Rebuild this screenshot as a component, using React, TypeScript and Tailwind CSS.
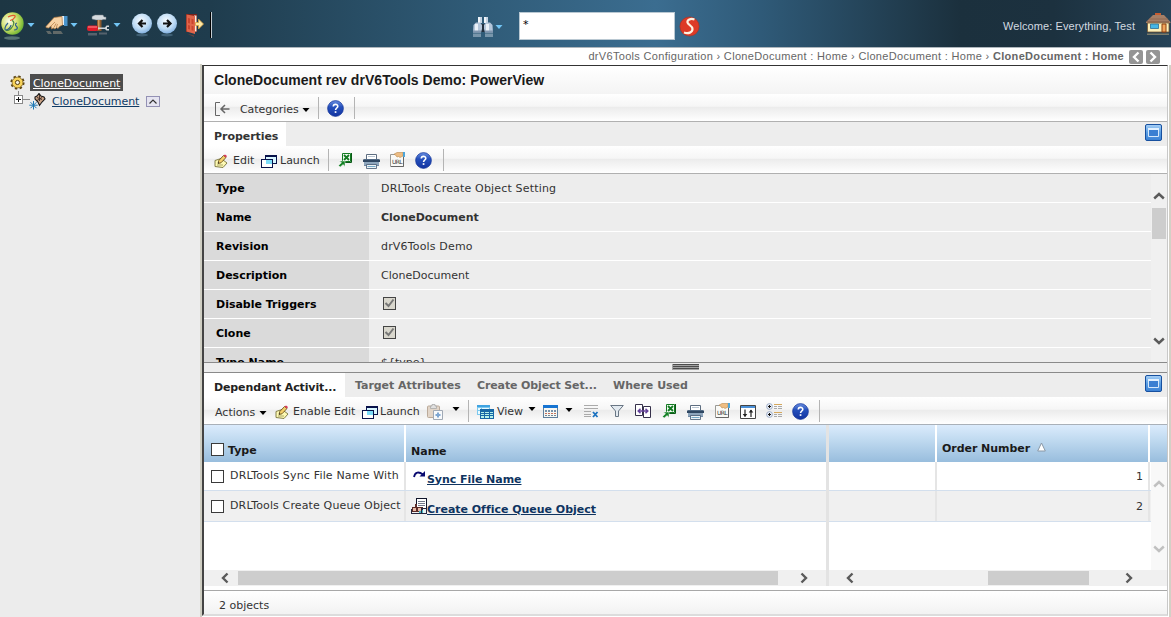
import React from "react";

type P = { className?: string; children?: React.ReactNode };

/* ---------- generic pieces ---------- */
const Slot = ({ className = "", children }: P) => (
  <div className={`flex shrink-0 items-center whitespace-nowrap ${className}`}>
    {typeof children === "string" ? <span className="pt-[2px]">{children}</span> : children}
  </div>
);
const Sep = () => <div className="h-[22px] w-px shrink-0 self-center bg-[#b4b4b4]" />;
const Caret = ({ className = "text-black" }: P) => (
  <svg width="8" height="5" viewBox="0 0 8 5" className={`shrink-0 ${className}`}>
    <path d="M.5 0h7L4 4z" fill="currentColor" />
  </svg>
);
const Box = () => <div className="h-[13px] w-[13px] shrink-0 border border-[#3a3a3a] bg-white" />;
const Checked = () => (
  <div className="mb-[2px] flex h-[13px] w-[13px] shrink-0 items-center justify-center border border-[#444] bg-[#d9d7cd]">
    <svg width="11" height="11" viewBox="0 0 11 11">
      <path d="M1.500 5l3 3 5-6.500" fill="none" stroke="#777" strokeWidth="2" />
    </svg>
  </div>
);
const Chevron = ({ d, className = "text-[#5a5a5a]" }: { d: "up" | "down" | "left" | "right"; className?: string }) => {
  const paths = {
    up: "M1.200 8.500L6 4l4.800 4.500",
    down: "M1.200 3.500L6 8l4.800-4.500",
    left: "M8.500 1.500L4 6l4.500 4.500",
    right: "M3.500 1.500L8 6l-4.500 4.500",
  };
  return (
    <svg width="12" height="12" viewBox="0 0 12 12" className={`shrink-0 ${className}`}>
      <path d={paths[d]} fill="none" stroke="currentColor" strokeWidth="2.400" />
    </svg>
  );
};

/* ---------- header icons ---------- */
const Globe = () => (
  <svg width="25" height="29" viewBox="0 0 25 29">
    <defs>
      <radialGradient id="globe" cx=".35" cy=".4" r=".7">
        <stop offset="0" stopColor="#fbfdf0" />
        <stop offset=".5" stopColor="#d3e070" />
        <stop offset=".85" stopColor="#86bf3c" />
        <stop offset="1" stopColor="#5aa53a" />
      </radialGradient>
    </defs>
    <ellipse cx="12" cy="27" rx="8" ry="1.800" fill="#8fb0a4" opacity=".5" />
    <circle cx="12.500" cy="12.500" r="11.200" fill="url(#globe)" />
    <path d="M8 6c4-2.500 8-2 7 0s-3 3-5 3.500" fill="none" stroke="#e2592f" strokeWidth="1.200" />
    <path d="M12 9.500c3 1 2 5-1 8-2 2-4 2.500-5 1.500" fill="none" stroke="#4d8a3a" strokeWidth="1.200" />
    <path d="M8 12c-3 3-4 7-2 7s5-3 5-5M17 12c-3 1-1 3 0 4s0 3-3 3" fill="none" stroke="#2f5f90" strokeWidth="1.200" />
  </svg>
);
const Hand = () => (
  <svg width="24" height="21" viewBox="0 0 24 21">
    <path d="M18 1h4.500v10H19z" fill="#4a94cc" />
    <path d="M16.500 1H19v9h-2z" fill="#e8f1f8" />
    <path d="M1 11.500L9 2.500l8-1 .5 8.500-3 1.500-1.500 2-1.500-1-1.500 1.500-1.800-1-1.700 1-.5-3L3.500 13 1 12.500z" fill="#f7d2a4" stroke="#b07840" strokeWidth=".7" />
    <path d="M6 11l4-4M9 12.500l2-4M11.500 12l1-3" stroke="#b07840" strokeWidth=".7" />
    <path d="M1 16h4l2 3H3zM8 16h8l2 3H8z" fill="#c9b49b" opacity=".4" />
  </svg>
);
const Hammer = () => (
  <svg width="23" height="24" viewBox="0 0 23 24">
    <path d="M5 2.500L8 1h8l1 2h2v2.500h-3l-1 .5H9L5 5z" fill="#d5dade" stroke="#757f86" strokeWidth=".5" />
    <path d="M10 6h4.500v11H10z" fill="#8d5a2d" />
    <path d="M11 6h1.500v10H11z" fill="#cf9a5f" />
    <rect x="0" y="11.500" width="11" height="5.500" rx="2" fill="#e01c2a" />
    <path d="M1 12.500h9v1H1z" fill="#ff8f8f" />
    <path d="M11 13.500h7l1.500-2H22v1.500h-2v2h2V16.500h-2.500L18 15h-7z" fill="#d0d5d8" />
    <path d="M1 19h9v2.500H1zM12 18.500h8v2h-8z" fill="#8b8b92" opacity=".5" />
  </svg>
);
const NavBall = ({ flip }: { flip?: boolean }) => (
  <svg width="21" height="25" viewBox="0 0 21 25">
    <defs>
      <radialGradient id="ball" cx=".45" cy=".35" r=".7">
        <stop offset="0" stopColor="#f4faff" />
        <stop offset=".6" stopColor="#bcdaf4" />
        <stop offset="1" stopColor="#79aadc" />
      </radialGradient>
    </defs>
    <ellipse cx="10" cy="23" rx="6" ry="1.500" fill="#7da6c4" opacity=".35" />
    <circle cx="10" cy="11.500" r="10" fill="url(#ball)" />
    <path
      d={flip ? "M6 11.500h7M10 8l3.500 3.500L10 15" : "M14 11.500H7.500M10.500 8L7 11.500l3.500 3.500"}
      fill="none"
      stroke="#111"
      strokeWidth="2.200"
    />
  </svg>
);
const Door = () => (
  <svg width="19" height="24" viewBox="0 0 19 24">
    <path d="M1 1h11v18H1z" fill="#7d2118" />
    <path d="M9 2.500h2.500v16H9z" fill="#f6efe2" />
    <path d="M1.500 1.500L10 3v18l-8.500-2.500z" fill="#e0654a" />
    <path d="M3 5l2 .5v5L3 10zM6.500 5.800l2 .5v5l-2-.5zM3 12l2 .5v4L3 16zM6.500 12.800l2 .5v4.500l-2-.5z" fill="#c9442e" />
    <path d="M10.500 9.500h3V6l5 5-5 5v-3.500h-3z" fill="#ffe9a5" stroke="#d9a03c" strokeWidth=".8" />
    <path d="M2 20.500l7 2v1.500z" fill="#b4452f" opacity=".5" />
  </svg>
);
const Binoculars = () => (
  <svg width="22" height="22" viewBox="0 0 22 22">
    <path d="M6 1h4v6H6zM12 1h4v6h-4z" fill="#c7d5e4" />
    <path d="M6 1h2v6H6zM12 1h2v6h-2z" fill="#f0f5fa" />
    <path d="M9 8h4v8H9z" fill="#22303f" />
    <path d="M1.500 9L4 6.500h4L10 9v4l-1 3.500H1z" fill="#b4c6da" />
    <path d="M12 9l2-2.500h4L20.500 9l.5 7.500h-8L12 13z" fill="#b4c6da" />
    <path d="M3 8h3v7H3zM14 8h3v7h-3z" fill="#eaf1f8" />
    <path d="M1 14.500h8v2H1zM13 14.500h8v2h-8z" fill="#8197b0" />
    <path d="M1 17.500h8v3.500H1zM13 17.500h8v3.500h-8z" fill="#a9bccd" opacity=".6" />
  </svg>
);
const RedS = () => (
  <svg width="21" height="21" viewBox="0 0 21 21">
    <circle cx="10.500" cy="10.500" r="9.600" fill="#dd3a26" stroke="#b4311f" strokeWidth=".6" />
    <path d="M15.500 3.500c-4-1.500-7.500.5-7 3S13.500 9.500 13.500 13s-4 5-8.500 3.500" fill="none" stroke="#fff1e0" strokeWidth="2.200" />
  </svg>
);
const House = () => (
  <svg width="25" height="23" viewBox="0 0 25 23">
    <path d="M9 0h6v3H9z" fill="#c75c30" />
    <path d="M7 2h11l6.500 7v1H0V9z" fill="#a57e66" />
    <path d="M3 6h19M1 8.500h22" stroke="#8b6650" strokeWidth=".8" />
    <path d="M1.500 10h21.500v9H1.500z" fill="#fbf0ba" stroke="#7a5630" strokeWidth=".8" />
    <path d="M4.500 11h8v4.500h-8z" fill="#47b7e6" stroke="#2c6e96" strokeWidth=".8" />
    <path d="M16 11h4v8h-4z" fill="#f1a45a" stroke="#8b3f10" />
    <path d="M1 20.500h22v1.500H1z" fill="#b4a37a" opacity=".6" />
  </svg>
);

/* ---------- toolbar icons ---------- */
const Help = () => (
  <svg width="17" height="17" viewBox="0 0 17 17">
    <defs>
      <linearGradient id="help" x2="0" y2="1">
        <stop offset="0" stopColor="#6a8fe0" />
        <stop offset=".4" stopColor="#2550bc" />
        <stop offset="1" stopColor="#1233a0" />
      </linearGradient>
    </defs>
    <circle cx="8.500" cy="8.500" r="7.900" fill="url(#help)" stroke="#17379a" strokeWidth=".7" />
    <path d="M6.300 6.500C6.300 3.600 10.800 3.800 10.800 6.200 10.800 8 8.600 8 8.600 10" fill="none" stroke="#fff" strokeWidth="1.600" />
    <path d="M7.700 11.200h1.700v1.700H7.700z" fill="#fff" />
  </svg>
);
const Pencil = () => (
  <svg width="14" height="14" viewBox="0 0 14 14">
    <path d="M1 6.500l6-2 6 4.500-4 4.500-8-1z" fill="#fdf9b4" stroke="#77733a" strokeWidth=".9" />
    <path d="M3 11h6" stroke="#aaa667" />
    <path d="M4 9.500l.8-3L9.500 1.500l2.500 2L7 8.800z" fill="#f5cf6a" stroke="#5b4412" strokeWidth=".8" />
    <path d="M9.500 1.500L11 .5 13 2l-1 1.500z" fill="#d83355" />
    <path d="M4 9.500l.4-1.500 1 .9z" fill="#222" />
  </svg>
);
const Launch = () => (
  <svg width="16" height="13" viewBox="0 0 16 13" shapeRendering="crispEdges">
    <path d="M4.500.5h11v8h-11z" fill="#d8f6ff" stroke="#08124a" />
    <path d="M4 0h12v2H4z" fill="#08124a" />
    <path d="M.5 4.500h11v8H.5z" fill="#fff" stroke="#08124a" />
    <path d="M5 5h6v4H5z" fill="#7cdcf8" />
    <path d="M0 4h12v1H0z" fill="#08124a" />
  </svg>
);
const Excel = () => (
  <svg width="14" height="14" viewBox="0 0 14 14">
    <path d="M4.500.5h8v8h-8z" fill="#f4fbf4" stroke="#137a22" />
    <path d="M6 2l5 5M11 2L6 7" stroke="#137a22" strokeWidth="1.800" />
    <path d="M13.500 0v9.500H6" fill="none" stroke="#0a5a16" />
    <path d="M1.500 8H7v5.500L5.200 11.500l-3 2.500L.5 12.500l3-2.800z" fill="#128024" stroke="#fff" strokeWidth=".5" />
  </svg>
);
const Printer = () => (
  <svg width="17" height="15" viewBox="0 0 17 15">
    <path d="M3.500.5h10v5h-10z" fill="#fff" stroke="#5d6d80" />
    <path d="M5 2.500h7" stroke="#b9c6d2" />
    <path d="M1 5h15v7H1z" fill="#728ba6" />
    <path d="M0 5.500h17V8H0z" fill="#2f4762" />
    <path d="M1 8h15v3H1z" fill="#8ea6bd" />
    <path d="M3.500 10.500h10v4h-10z" fill="#eef4f8" stroke="#40566e" strokeWidth=".8" />
    <path d="M4.500 12.500h8" stroke="#74a9c8" />
  </svg>
);
const UrlIcon = () => (
  <svg width="17" height="16" viewBox="0 0 17 16">
    <path d="M1.500 2.500h13v12h-13z" fill="#fafaf7" stroke="#9a9a96" />
    <path d="M2 14.500h12.500V3" fill="none" stroke="#666" />
    <path d="M5 2.200L8 .5h6v3.500l-3 1.500-1.500-1L8 5 6.500 3z" fill="#eebd83" stroke="#b98a4d" strokeWidth=".6" />
    <path d="M14 0h2v5h-2z" fill="#4da6da" />
    <text x="3" y="12" fontSize="6" textLength="10.500" fontFamily="DejaVu Sans, sans-serif" fill="#333">URL</text>
  </svg>
);
const Collapse = () => (
  <svg width="15" height="15" viewBox="0 0 15 15" fill="none" stroke="#666">
    <path d="M5 .5H.500v13H5" />
    <path d="M14.500 7H6M10 3L6 7l4 4" strokeWidth="1.500" />
  </svg>
);
const WindowIcon = () => (
  <svg width="17" height="17" viewBox="0 0 17 17">
    <defs>
      <linearGradient id="win" x2="0" y2="1">
        <stop offset="0" stopColor="#a8d0f6" />
        <stop offset=".5" stopColor="#5b9fe4" />
        <stop offset="1" stopColor="#3a80d4" />
      </linearGradient>
    </defs>
    <rect x=".5" y=".5" width="16" height="16" rx="1.500" fill="url(#win)" stroke="#17509f" />
    <path d="M3.500 4.500h10v8h-10z" fill="#3a7fd2" stroke="#d5e8fb" />
    <path d="M3 4h11v2H3z" fill="#e1f0ff" />
  </svg>
);
const Paste = () => (
  <svg width="17" height="16" viewBox="0 0 17 16">
    <rect x=".5" y="2" width="12" height="11.500" rx="1" fill="#e2d5c8" stroke="#bbaa9a" />
    <path d="M3.500 4.500V2h1.500V.5h3V2h1.500v2.500z" fill="#e0e0e0" stroke="#aaa" strokeWidth=".8" />
    <path d="M6.500 6.500h9v9h-9z" fill="#f7f9fb" stroke="#a0a9b5" />
    <path d="M11 8.500v5M8.500 11h5" stroke="#7ea6d2" strokeWidth="2" />
  </svg>
);
const Tables = () => (
  <svg width="17" height="14" viewBox="0 0 17 14" shapeRendering="crispEdges">
    <path d="M0 0h13v10H0z" fill="#7cc8ee" />
    <path d="M0 0h13v2H0z" fill="#3fa3e2" />
    <path d="M1 3h3v2H1zM5 3h7v2H5zM1 6h3v3H1z" fill="#eafaff" />
    <path d="M3 4h14v10H3z" fill="#1668a6" />
    <path d="M4 7h3v1H4zM8 7h4v1H8zM13 7h3v1h-3zM4 9h3v1H4zM8 9h4v1H8zM13 9h3v1h-3zM4 11h3v2H4zM8 11h4v2H8zM13 11h3v2h-3z" fill="#b5f1e9" />
  </svg>
);
const Calendar = () => (
  <svg width="15" height="13" viewBox="0 0 15 13" shapeRendering="crispEdges">
    <path d="M.5.5h14v12H.5z" fill="#f7f7f2" stroke="#5f7f9c" />
    <path d="M0 0h15v3H0z" fill="#1674d2" />
    <path d="M2 5h2v2H2zM5 5h2v2H5zM8 5h2v2H8zM11 5h2v2h-2z" fill="#7892aa" />
    <path d="M2 8h2v1H2zM5 8h2v1H5zM8 8h2v1H8zM11 8h2v1h-2z" fill="#c2705a" />
    <path d="M2 10h2v1H2zM5 10h2v1H5zM8 10h2v1H8zM11 10h2v1h-2z" fill="#6f8496" />
  </svg>
);
const WrapIcon = () => (
  <svg width="15" height="13" viewBox="0 0 15 13">
    <path d="M0 .5h14M0 3.500h14M0 6.500h7M0 9.500h7M0 11.500h7" stroke="#aaa" />
    <path d="M9 7l4.500 5M13.500 7L9 12" stroke="#1c72c0" strokeWidth="1.800" />
  </svg>
);
const Filter = () => (
  <svg width="14" height="12" viewBox="0 0 14 12">
    <path d="M.7.500h12.600L8.500 6v5.500h-3V6z" fill="#e3eaf0" stroke="#697684" />
  </svg>
);
const Compare = () => (
  <svg width="16" height="14" viewBox="0 0 16 14">
    <path d="M.5.500h7v11h-7zM8.500 2.500h7v11h-7z" fill="#fff" stroke="#35304a" />
    <path d="M3 7h10M5.500 4.800L3.200 7l2.300 2.200M10.500 4.800L12.800 7l-2.300 2.200" fill="none" stroke="#65429a" strokeWidth="1.500" />
  </svg>
);
const SortIcon = () => (
  <svg width="16" height="14" viewBox="0 0 16 14">
    <path d="M.5.500h15v13H.5z" fill="#fff" stroke="#444" />
    <path d="M1 1h14v2H1z" fill="#4a90d8" />
    <path d="M5 4.500v7M11 12V5" stroke="#222" strokeWidth="1.200" />
    <path d="M2.700 9h4.600L5 12zM8.700 7.500h4.600L11 4.500z" fill="#222" />
  </svg>
);
const TreeList = () => (
  <svg width="16" height="15" viewBox="0 0 16 15">
    <circle cx="3.500" cy="3.500" r="2.900" fill="#e8eef8" stroke="#8ea0bb" strokeWidth=".8" />
    <circle cx="3.500" cy="11.500" r="2.900" fill="#e8eef8" stroke="#8ea0bb" strokeWidth=".8" />
    <path d="M2 3.500h3M3.500 2v3M2 11.500h3M3.500 10v3" stroke="#111" />
    <path d="M8 1.500h8M8 9.500h8" stroke="#d6a85c" />
    <path d="M8 3.500h3m1 0h4M8 5.500h3m1 0h4M8 11.500h3m1 0h4M8 13.500h3m1 0h4" stroke="#aaa" />
  </svg>
);
const Grip = () => (
  <svg width="27" height="6" viewBox="0 0 27 6" shapeRendering="crispEdges">
    <path d="M0 0h27v6H0z" fill="#a2a2a2" />
    <path d="M1 .5h26M1 2.500h26M1 4.500h26" stroke="#4c4c4c" />
  </svg>
);
const Gear = () => (
  <svg width="15" height="15" viewBox="0 0 15 15">
    <circle cx="7.500" cy="7.500" r="6.200" fill="none" stroke="#5a430f" strokeWidth="1.800" strokeDasharray="2.435 2.435" />
    <circle cx="7.500" cy="7.500" r="5.400" fill="#f8d45a" stroke="#7a5c1c" strokeWidth=".8" />
    <circle cx="7.500" cy="7.500" r="2.100" fill="#f4f1e2" stroke="#553d10" />
  </svg>
);
const NodeIcon = () => (
  <svg width="17" height="17" viewBox="0 0 17 17">
    <path d="M6 4l2-1 2-2.500L12 3l3 1 1 2-3 3-2.500 3.500L9 9 6 6z" fill="#c9a184" stroke="#1a1a1a" strokeWidth="1.100" />
    <path d="M8 4.500l5 2M10.500 2v6M8 7.500l5-3" stroke="#3a2a24" strokeWidth=".9" />
    <path d="M4.500 8v8.500M.3 12.200h8.400M1.500 9.200l6 6M7.500 9.200l-6 6" stroke="#1d78b4" strokeWidth="1" />
  </svg>
);
const Swoosh = () => (
  <svg width="13" height="9" viewBox="0 0 13 9">
    <path d="M1 7C2 1.500 6 1.500 10 4.500" fill="none" stroke="#0a0a70" strokeWidth="1.800" />
    <path d="M12 1v5.500H6.500z" fill="#0a0a70" />
  </svg>
);
const QueueIcon = () => (
  <svg width="16" height="17" viewBox="0 0 16 17" shapeRendering="crispEdges">
    <path d="M5.500.500h10v13h-10z" fill="#fff" stroke="#10152a" />
    <path d="M7 3h7v1H7zM7 5h7v1H7zM7 7h7v1H7z" fill="#74798a" />
    <path d="M1 9h3V6h2v3h6v5H1z" fill="#5a2a26" />
    <path d="M2 10h3v3H2zM7 10h4v3H7z" fill="#e8b9a5" />
    <path d="M0 11h1v5H0zM1 15h9v1H1zM10 10h6v6h-6z" fill="#26263e" />
    <path d="M12 11h3v4h-3z" fill="#e8f4f4" />
    <path d="M11 12h1v3h-1zM8 13h2v2H8z" fill="#48b9c6" />
  </svg>
);

/* ---------- layout ---------- */
const bar = "bg-[linear-gradient(#ffffff_0%,#f6f6f6_45%,#ececec_50%,#ffffff_100%)]";
const head = "bg-[linear-gradient(#dbebfc,#c0daf0_40%,#98bddd)]";

const rows: { label: string; value: React.ReactNode }[] = [
  { label: "Type", value: <span className="pt-[2px] tracking-[0.17px]">DRLTools Create Object Setting</span> },
  { label: "Name", value: <b className="pt-[2px]">CloneDocument</b> },
  { label: "Revision", value: <span className="pt-[2px] tracking-[0.17px]">drV6Tools Demo</span> },
  { label: "Description", value: "CloneDocument" },
  { label: "Disable Triggers", value: <span className="pl-[2px]"><Checked /></span> },
  { label: "Clone", value: <span className="pl-[2px]"><Checked /></span> },
  { label: "Type Name", value: "${type}" },
];

const Header = () => (
  <header className="flex h-[48px] shrink-0 items-center border-b border-[#aeb6bc] bg-[linear-gradient(90deg,#1d3643_0%,#1f3c4d_18%,#2f5a76_40%,#3b6d90_56%,#2f5a78_65%,#1b303d_82%,#1c313f_90%,#264358_100%)]">
    <Slot className="w-[27px] pt-[4px]"><Globe /></Slot>
    <Slot className="w-[18px] pt-[4px]"><Caret className="text-[#72c5f5]" /></Slot>
    <Slot className="w-[25px] pt-[4px]"><Hand /></Slot>
    <Slot className="w-[17px] pt-[4px]"><Caret className="text-[#72c5f5]" /></Slot>
    <Slot className="w-[26px] pt-[4px]"><Hammer /></Slot>
    <Slot className="w-[19px] pt-[4px]"><Caret className="text-[#72c5f5]" /></Slot>
    <Slot className="w-[25px] pt-[2px]"><NavBall /></Slot>
    <Slot className="w-[28px] pt-[2px]"><NavBall flip /></Slot>
    <Slot className="w-[25px] pt-[3px]"><Door /></Slot>
    <Slot className="w-[262px] pt-[2px]"><div className="h-[26px] w-[2px] border-l border-black bg-[#c3ccd2]" /></Slot>
    <Slot className="w-[23px] pt-[6px]"><Binoculars /></Slot>
    <Slot className="w-[24px] pt-[7px]"><Caret className="text-[#72c5f5]" /></Slot>
    <Slot className="mt-[4px] h-[28px] w-[156px] border border-[#b9c8d2] bg-white pl-[3px] text-[11px] text-black"><span className="pb-[2px]">*</span></Slot>
    <Slot className="w-[328px] pl-[4px] pt-[6px]"><RedS /></Slot>
    <Slot className="w-[143px] pt-[3px] font-['Liberation_Sans',sans-serif] text-[11px] tracking-[0.09px] text-[#d3dae0]">Welcome: Everything, Test</Slot>
    <Slot className="pt-[2px]"><House /></Slot>
  </header>
);

const Crumbs = () => (
  <div className="flex h-[17px] shrink-0 items-center justify-end bg-white pr-[11px] font-['Liberation_Sans',sans-serif] text-[11px] tracking-[0.32px] text-[#666]">
    <span className="pb-px">drV6Tools Configuration › CloneDocument : Home › CloneDocument : Home › <b>CloneDocument : Home</b></span>
    <div className="ml-[5px] flex gap-[3px]">
      <span className="flex h-[14px] w-[14px] items-center justify-center rounded-[2px] bg-[#959595]"><Chevron d="left" className="text-white" /></span>
      <span className="flex h-[14px] w-[14px] items-center justify-center rounded-[2px] bg-[#959595]"><Chevron d="right" className="text-white" /></span>
    </div>
  </div>
);

const Tree = () => (
  <aside className="-mt-px flex w-[200px] shrink-0 flex-col bg-[#ececec] pt-[10px] tracking-[-0.07px] text-[#0f3b66]">
    <div className="flex h-[17px] items-center pl-[10px]">
      <Gear />
      <span className="ml-[5px] flex h-[17px] w-[93px] items-center bg-[#4c4c4c] pl-[3px] pt-[2px] text-white underline">CloneDocument</span>
    </div>
    <div className="flex h-[20px] items-center pl-[14px]">
      <svg width="16" height="20" viewBox="0 0 16 20" shapeRendering="crispEdges">
        <path d="M4.500 0v4M9 8.500h7" stroke="#888" />
        <path d="M.5 4.500h8v8h-8z" fill="#fff" stroke="#888" />
        <path d="M2 8.500h5M4.500 6v5" stroke="#111" />
      </svg>
      <span className="-ml-px"><NodeIcon /></span>
      <span className="ml-[6px] w-[94px] pt-[2px] underline">CloneDocument</span>
      <span className="flex h-[11px] w-[14px] items-center justify-center border border-[#9391b4] bg-[#e5e4f0]">
        <svg width="8" height="5" viewBox="0 0 8 5"><path d="M.5 4.500L4 1l3.500 3.500" fill="none" stroke="#333" strokeWidth="1.200" /></svg>
      </span>
    </div>
  </aside>
);

const Properties = () => (
  <>
    <div className="flex h-[28px] shrink-0 items-center bg-gradient-to-b from-white to-[#f4f4f4] pl-[10px] font-['Liberation_Sans',sans-serif] text-[14px] font-bold tracking-[0.04px] text-[#1a1a1a]">
      CloneDocument rev drV6Tools Demo: PowerView
    </div>
    <div className={`flex h-[28px] shrink-0 items-center border-b border-[#b0b0b0] ${bar}`}>
      <Slot className="w-[36px] pl-[11px] pt-[3px]"><Collapse /></Slot>
      <Slot className="w-[62px] pt-[2px] tracking-[-0.07px]">Categories</Slot>
      <Slot className="w-[16px] pt-[5px]"><Caret /></Slot>
      <Sep />
      <Slot className="w-[35px] pl-[8px] pt-[2px]"><Help /></Slot>
      <Sep />
    </div>
    <div className="flex h-[24px] shrink-0 items-center justify-between bg-[#ededed] pr-[5px]">
      <Slot className="h-full w-[82px] bg-white pl-[10px] pt-[3px] font-bold tracking-[-0.05px]">Properties</Slot>
      <span className="pb-[4px]"><WindowIcon /></span>
    </div>
    <div className={`flex h-[28px] shrink-0 items-center border-b border-[#b0b0b0] ${bar}`}>
      <Slot className="w-[29px] pl-[10px] pt-[2px]"><Pencil /></Slot>
      <Slot className="w-[28px]">Edit</Slot>
      <Slot className="w-[19px] pt-[3px]"><Launch /></Slot>
      <Slot className="w-[48px]">Launch</Slot>
      <Sep />
      <Slot className="w-[34px] pl-[9px]"><Excel /></Slot>
      <Slot className="w-[26px] pt-[3px]"><Printer /></Slot>
      <Slot className="w-[26px] pt-px"><UrlIcon /></Slot>
      <Slot className="w-[28px] pt-[2px]"><Help /></Slot>
      <Sep />
    </div>
    <div className="flex h-[188px] shrink-0 overflow-hidden">
      <div className="flex flex-1 flex-col">
        {rows.map((r) => (
          <div key={r.label} className="flex h-[29px] shrink-0 border-b border-white">
            <Slot className="w-[165px] bg-[#dadada] pl-[12px] font-bold text-black">{r.label}</Slot>
            <Slot className="flex-1 bg-[#ededed] pl-[12px]">{r.value}</Slot>
          </div>
        ))}
      </div>
      <div className="flex w-[16px] flex-col items-center bg-[#f0f0f0] pt-[16px]">
        <Chevron d="up" />
        <div className="mt-[6px] h-[31px] w-[14px] bg-[#cdcdcd]" />
        <div className="mt-[96px]"><Chevron d="down" /></div>
      </div>
    </div>
  </>
);

const Tab = ({ className = "", children }: P) => (
  <Slot className={`pl-[10px] font-bold text-[#666] ${className}`}>
    <span className="pt-[2px]">{children}</span>
  </Slot>
);

const Activities = () => (
  <>
    <div className="flex h-[24px] shrink-0 bg-[#ededed]">
      <Slot className="w-[141px] bg-white pl-[10px] pt-[4px] font-bold tracking-[-0.12px] text-[#222]">Dependant Activit...</Slot>
      <Tab className="w-[122px] tracking-[-0.05px]">Target Attributes</Tab>
      <Tab className="w-[136px] tracking-[-0.12px]">Create Object Set...</Tab>
      <Tab className="flex-1">Where Used</Tab>
      <Slot className="mr-[5px] pb-[3px]"><WindowIcon /></Slot>
    </div>
    <div className={`flex h-[28px] shrink-0 items-center border-b border-[#a9b0b8] ${bar}`}>
      <Slot className="w-[55px] pl-[11px] pt-[3px]">Actions</Slot>
      <Slot className="w-[16px] pt-[5px]"><Caret /></Slot>
      <Slot className="w-[18px] pt-[2px]"><Pencil /></Slot>
      <Slot className="w-[69px]">Enable Edit</Slot>
      <Slot className="w-[18px] pt-[3px]"><Launch /></Slot>
      <Slot className="w-[47px]">Launch</Slot>
      <Slot className="w-[25px] pt-[2px]"><Paste /></Slot>
      <Slot className="w-[16px] pb-[2px]"><Caret /></Slot>
      <Sep />
      <Slot className="w-[28px] pl-[8px] pt-[2px]"><Tables /></Slot>
      <Slot className="w-[31px]">View</Slot>
      <Slot className="w-[15px] pb-[2px]"><Caret /></Slot>
      <Slot className="w-[22px] pt-[2px]"><Calendar /></Slot>
      <Slot className="w-[19px]"><Caret /></Slot>
      <Slot className="w-[26px] pt-[2px]"><WrapIcon /></Slot>
      <Slot className="w-[25px]"><Filter /></Slot>
      <Slot className="w-[27px] pt-px"><Compare /></Slot>
      <Slot className="w-[25px]"><Excel /></Slot>
      <Slot className="w-[27px] pt-[3px]"><Printer /></Slot>
      <Slot className="w-[26px] pt-px"><UrlIcon /></Slot>
      <Slot className="w-[26px] pt-[2px]"><SortIcon /></Slot>
      <Slot className="w-[26px]"><TreeList /></Slot>
      <Slot className="w-[27px] pt-[2px]"><Help /></Slot>
      <Sep />
    </div>
  </>
);

const line = "border-b border-[#d3dfed]";
const Grid = () => (
  <div className="flex h-[161px] shrink-0">
    <div className="flex w-[622px] flex-col">
      <div className={`flex h-[37px] shrink-0 ${head}`}>
        <Slot className="w-[202px] border-r-2 border-white pl-[7px] pt-[12px] font-bold text-[#1a1a1a]"><Box /><span className="pl-[4px] pt-[2px]">Type</span></Slot>
        <Slot className="pl-[5px] pt-[15px] font-bold text-[#1a1a1a]">Name</Slot>
      </div>
      <div className={`flex h-[29px] shrink-0 bg-white ${line}`}>
        <Slot className="w-[202px] border-r-2 border-[#e5e5e5] pl-[7px]"><Box /><span className="pl-[6px] tracking-[0.17px]">DRLTools Sync File Name With</span></Slot>
        <Slot className="pl-[7px] font-bold tracking-[-0.05px] text-[#0f3460]"><span className="pb-[3px]"><Swoosh /></span><span className="ml-[1px] pt-[7px] underline">Sync File Name</span></Slot>
      </div>
      <div className={`flex h-[31px] shrink-0 bg-[#f0f0f0] ${line}`}>
        <Slot className="w-[202px] border-r-2 border-[#e5e5e5] pl-[7px]"><Box /><span className="pl-[6px] tracking-[0.14px]">DRLTools Create Queue Object</span></Slot>
        <Slot className="pl-[5px] font-bold tracking-[-0.02px] text-[#0f3460]"><QueueIcon /><span className="pt-[7px] underline">Create Office Queue Object</span></Slot>
      </div>
      <div className="flex-1 bg-white" />
      <div className="flex h-[16px] shrink-0 items-center bg-[#f0f0f0] pl-[15px]">
        <Chevron d="left" />
        <div className="ml-[7px] h-[14px] w-[540px] bg-[#cdcdcd]" />
        <div className="ml-[20px] flex"><Chevron d="right" /></div>
      </div>
    </div>
    <div className="w-[3px] bg-[#e3e3e3]" />
    <div className="flex flex-1 flex-col">
      <div className={`flex h-[37px] shrink-0 ${head}`}>
        <div className="w-[108px] border-r-2 border-white" />
        <Slot className="w-[213px] border-r-2 border-white pl-[5px] pt-[10px] font-bold tracking-[-0.04px] text-[#1a1a1a]">
          <span>Order Number</span>
          <svg className="mb-[3px] ml-[7px]" width="9" height="10" viewBox="0 0 9 10"><path d="M4.500 1l3.800 8H.7z" fill="#fff" stroke="#8a98a6" /></svg>
        </Slot>
      </div>
      <div className="flex flex-1">
        <div className="flex flex-1 flex-col">
          <div className={`flex h-[29px] shrink-0 bg-white ${line}`}>
            <div className="w-[108px] border-r-2 border-[#e5e5e5]" />
            <Slot className="w-[213px] justify-end border-r-2 border-[#e5e5e5] pr-[5px]">1</Slot>
          </div>
          <div className={`flex h-[31px] shrink-0 bg-[#f0f0f0] ${line}`}>
            <div className="w-[108px] border-r-2 border-[#e5e5e5]" />
            <Slot className="w-[213px] justify-end border-r-2 border-[#e5e5e5] pr-[5px]">2</Slot>
          </div>
          <div className="flex-1 bg-white" />
        </div>
        <div className="flex w-[16px] flex-col items-center justify-between bg-[#f8f8f8] pb-[15px] pt-[16px]">
          <Chevron d="up" className="text-[#c0c0c0]" />
          <Chevron d="down" className="text-[#c0c0c0]" />
        </div>
      </div>
      <div className="flex h-[16px] shrink-0 items-center bg-[#f0f0f0] pl-[15px]">
        <Chevron d="left" />
        <div className="ml-[132px] h-[14px] w-[101px] bg-[#cdcdcd]" />
        <div className="ml-[34px] flex"><Chevron d="right" /></div>
      </div>
    </div>
  </div>
);

export default function App() {
  return (
    <div className="flex h-[617px] w-[1171px] flex-col overflow-hidden bg-white font-['DejaVu_Sans',sans-serif] text-[11px] leading-[14px] text-[#333]">
      <Header />
      <Crumbs />
      <div className="flex flex-1 overflow-visible">
        <Tree />
        <div className="-mt-px w-[2px] bg-[#cfcec3]" />
        <main className="flex h-[551px] w-[966px] flex-col border-b-2 border-l-2 border-r border-t border-b-[#dcdcdc] border-l-[#444] border-r-[#c8c8c8] border-t-[#333]">
          <Properties />
          <div className="flex h-[11px] shrink-0 justify-center border-y border-[#8a8a8a] bg-[#ededed] pt-px"><Grip /></div>
          <Activities />
          <Grid />
          <div className="h-[4px] shrink-0 bg-white" />
          <div className="flex flex-1 items-center border-t border-[#a8a8a8] bg-gradient-to-b from-white to-[#f2f2f2] pl-[15px] pt-[6px]">2 objects</div>
        </main>
        <div className="ml-px w-[2px] bg-[#d3d0c6]" />
      </div>
    </div>
  );
}
